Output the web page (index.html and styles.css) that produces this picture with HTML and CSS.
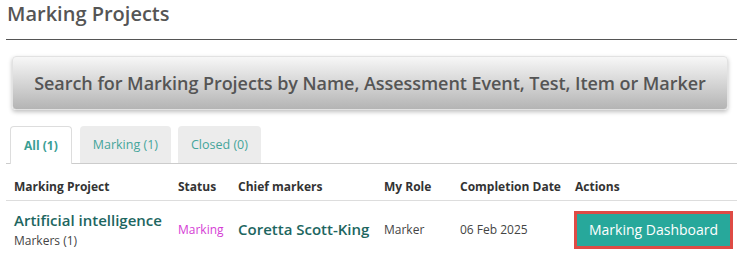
FILE: index.html
```html
<!DOCTYPE html>
<html lang="en">
<head>
    <meta charset="UTF-8">
    <meta name="viewport" content="width=device-width, initial-scale=1">
    <title>Marking Projects</title>
    <link rel="stylesheet" href="styles.css">
</head>
<body>
    <div class="page">
        <h1 class="title">Marking Projects</h1>
        <div class="rule"></div>

        <div class="search">Search for Marking Projects by Name, Assessment Event, Test, Item or Marker</div>

        <div class="tabs">
            <div class="tab active">All (1)</div>
            <div class="tab">Marking (1)</div>
            <div class="tab">Closed (0)</div>
        </div>

        <div class="grid head">
            <div>Marking Project</div>
            <div>Status</div>
            <div>Chief markers</div>
            <div>My Role</div>
            <div>Completion Date</div>
            <div>Actions</div>
        </div>
        <div class="grid row">
            <div>
                <div class="name">Artificial intelligence</div>
                <div class="sub">Markers (1)</div>
            </div>
            <div class="status">Marking</div>
            <div class="name">Coretta Scott-King</div>
            <div>Marker</div>
            <div>06 Feb 2025</div>
            <div><button class="dash">Marking Dashboard</button></div>
        </div>
    </div>
</body>
</html>
```

FILE: styles.css
```css
body {
    margin: 0;
    font-family: "Open Sans", "DejaVu Sans", sans-serif;
    color: #444;
    background: #fff;
}
.page {
    padding: 0 2px 0 6px;
}
.title {
    margin: 0;
    padding: 0 1px;
    font-size: 20px;
    font-weight: 600;
    line-height: 28px;
    color: #555;
}
.rule {
    margin-top: 11px;
    border-top: 1px solid #555;
}
.search {
    margin: 16px 9px 0 6px;
    height: 54px;
    display: flex;
    align-items: center;
    justify-content: center;
    font-size: 18px;
    font-weight: 600;
    letter-spacing: -0.05px;
    color: #555;
    border-radius: 4px;
    background: linear-gradient(#f7f7f7, #b4b4b4);
    box-shadow: 0 2px 4px rgba(0,0,0,0.25);
    border: 1px solid #e2e2e2;
    box-sizing: border-box;
}
.tabs {
    display: flex;
    gap: 7px;
    margin-top: 16px;
    padding-left: 4px;
    border-bottom: 1px solid #ccc;
}
.tab {
    height: 37px;
    box-sizing: border-box;
    padding: 0 13px;
    display: flex;
    align-items: center;
    font-size: 12.5px;
    color: #45a59b;
    background: #ececec;
    border-radius: 4px 4px 0 0;
}
.tab.active {
    background: #fff;
    border: 1px solid #ddd;
    border-bottom: none;
    margin-bottom: -1px;
    margin-right: 1px;
    height: 38px;
    font-size: 12px;
    font-weight: bold;
    color: #3a9e94;
}
.grid {
    display: grid;
    grid-template-columns: 164px 60px 146px 76px 115px 1fr;
    align-items: center;
    border-bottom: 1px solid #ddd;
}
.grid > div {
    padding-left: 8px;
}
.head {
    height: 37px;
    box-sizing: border-box;
    padding-top: 9px;
    font-size: 12px;
    font-weight: bold;
    color: #333;
}
.row {
    height: 56px;
    font-size: 12px;
    color: #444;
    border-bottom: none;
}
.name {
    font-size: 15px;
    font-weight: 600;
    color: #1d665f;
}
.sub {
    margin-top: 2px;
}
.status {
    color: #d53cd5;
}
.dash {
    font-family: inherit;
    font-size: 14px;
    color: #fff;
    background: #27a89b;
    border: 3px solid #de4b45;
    padding: 0 12px;
    height: 38px;
    margin-left: -1px;
    margin-top: 1px;
    cursor: pointer;
}
```
